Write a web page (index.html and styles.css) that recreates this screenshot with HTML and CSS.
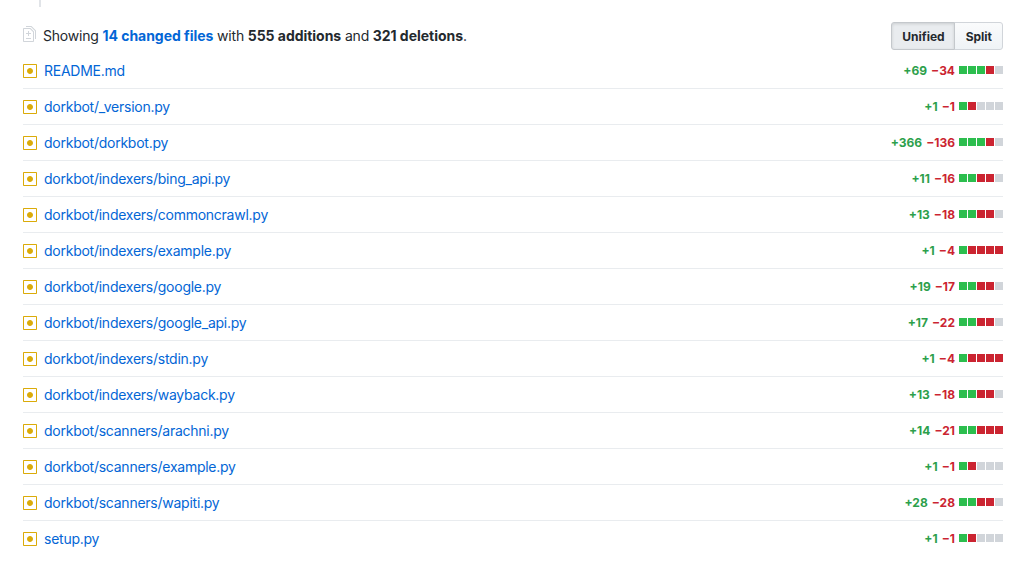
FILE: index.html
```html
<!DOCTYPE html>
<html lang="en">
<head>
<meta charset="utf-8">
<title>Files changed</title>
<link rel="stylesheet" href="styles.css">
</head>
<body>
<div class="discussion-tail"></div>
<div class="page">
  <div class="toc-header">
    <div class="summary">
      <svg class="icon-file-diff" viewBox="0 0 13 16" width="13" height="16"><path d="M6 7h2v1H6v2H5V8H3V7h2V5h1v2zm-3 6h5v-1H3v1zM7.5 2L11 5.5V15c0 .55-.45 1-1 1H1c-.55 0-1-.45-1-1V3c0-.55.45-1 1-1h6.5zM10 6L7 3H1v12h9V6zM8.5 0H3v1h5l4 4v8h1V4.5L8.5 0z"/></svg>
      <span class="summary-text">Showing <a class="link strong" href="#">14 changed files</a> with <strong>555 additions</strong> and <strong>321 deletions</strong>.</span>
    </div>
    <div class="btn-group"><span class="btn selected">Unified</span><span class="btn">Split</span></div>
  </div>
  <ol class="files" id="files"></ol>
</div>
<script src="app.js"></script>
</body>
</html>
```
FILE: styles.css
```css
* { box-sizing: border-box; }
html, body { margin: 0; padding: 0; background: #fff; }
body { font-family: Inter, "Liberation Sans", sans-serif; font-size: 14px; color: #24292e; height: 571px; overflow: hidden; }
.discussion-tail { width: 2px; height: 7px; margin-left: 39px; background: #e1e4e8; }
.page { padding: 0 27px 0 23px; }
.toc-header { display: flex; justify-content: space-between; align-items: flex-start; height: 46px; padding-top: 15px; }
.summary { display: flex; align-items: center; gap: 7px; height: 26px; }
.summary-text { letter-spacing: -0.2px; }
.icon-file-diff { fill: #d1d5da; flex: none; margin-top: -2px; }
.link { color: #0366d6; text-decoration: none; }
.strong, strong { font-weight: 700; letter-spacing: -0.03px; }
.btn-group { display: flex; }
.btn { height: 28px; padding: 0 10px; display: flex; align-items: center; font-size: 12px; font-weight: 700; color: #24292e; border: 1px solid #d1d5da; background: linear-gradient(#fafbfc, #eff3f6); }
.btn:first-child { border-radius: 3px 0 0 3px; padding-right: 9px; }
.btn:last-child { border-radius: 0 3px 3px 0; margin-left: -1px; padding-left: 11px; }
.btn.selected { background: #e9ecef; border-color: #c4c8cc; box-shadow: inset 0 1px 3px rgba(27,31,35,.15); position: relative; z-index: 1; }
.files { list-style: none; margin: 0; padding: 0; }
.file { display: flex; align-items: center; height: 36px; border-top: 1px solid #e9ecef; }
.file:first-child { border-top: 0; height: 35px; }
.icon-mod { fill: #dbab09; flex: none; margin-right: 7px; }
.name { flex: 1; letter-spacing: -0.25px; }
.stats { display: flex; align-items: center; font-size: 12px; font-weight: 700; }
.add { color: #2c9f4b; }
.del { color: #cb2431; margin-left: 4px; }
.bar { display: flex; gap: 1px; margin-left: 4px; margin-bottom: 1px; }
.bar i { display: block; width: 8px; height: 8px; background: #d1d5da; }
.bar i.g { background: #2cbe4e; }
.bar i.r { background: #cb2431; }
```
FILE: app.js
```js
var data = [
  ["README.md", 69, 34, "gggrn"],
  ["dorkbot/_version.py", 1, 1, "grnnn"],
  ["dorkbot/dorkbot.py", 366, 136, "gggrn"],
  ["dorkbot/indexers/bing_api.py", 11, 16, "ggrrn"],
  ["dorkbot/indexers/commoncrawl.py", 13, 18, "ggrrn"],
  ["dorkbot/indexers/example.py", 1, 4, "grrrr"],
  ["dorkbot/indexers/google.py", 19, 17, "ggrrn"],
  ["dorkbot/indexers/google_api.py", 17, 22, "ggrrn"],
  ["dorkbot/indexers/stdin.py", 1, 4, "grrrr"],
  ["dorkbot/indexers/wayback.py", 13, 18, "ggrrn"],
  ["dorkbot/scanners/arachni.py", 14, 21, "ggrrr"],
  ["dorkbot/scanners/example.py", 1, 1, "grnnn"],
  ["dorkbot/scanners/wapiti.py", 28, 28, "ggrrn"],
  ["setup.py", 1, 1, "grnnn"]
];
var icon = '<svg class="icon-mod" viewBox="0 0 14 16" width="14" height="16"><path d="M13 1H1c-.55 0-1 .45-1 1v12c0 .55.45 1 1 1h12c.55 0 1-.45 1-1V2c0-.55-.45-1-1-1zm0 13H1V2h12v12zM4 8c0-1.66 1.34-3 3-3s3 1.34 3 3-1.34 3-3 3-3-1.34-3-3z"/></svg>';
document.getElementById("files").innerHTML = data.map(function (d) {
  var bar = d[3].split("").map(function (c) { return '<i class="' + c + '"></i>'; }).join("");
  return '<li class="file">' + icon +
    '<a class="link name" href="#">' + d[0] + '</a>' +
    '<span class="stats"><span class="add">+' + d[1] + '</span><span class="del">\u2212' + d[2] + '</span>' +
    '<span class="bar">' + bar + '</span></span></li>';
}).join("");
```
